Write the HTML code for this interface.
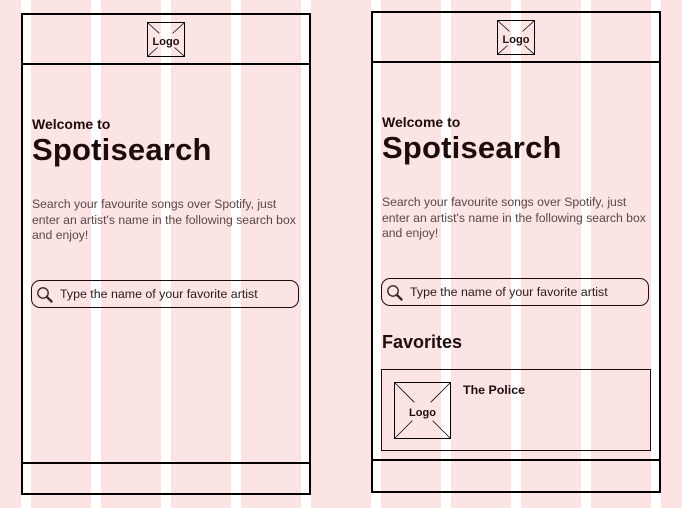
<!DOCTYPE html>
<html><head><meta charset="utf-8"><style>
body{margin:0;width:682px;height:508px;background:#fde4e4;position:relative;overflow:hidden;font-family:"Liberation Sans",Arial,sans-serif;color:#1e0c0c}
.s{position:absolute;top:0;width:10px;height:508px;background:#fff}
.frame{position:absolute;width:286px;border:2px solid #000}
.hl{position:absolute;left:0;width:100%;height:2px;background:#000}
.abs{position:absolute}
.logo{position:absolute;border:1px solid #000;box-sizing:border-box;font-weight:bold;font-size:11px;display:flex;align-items:center;justify-content:center}
.logo svg{position:absolute;left:0;top:0;width:100%;height:100%}
.logo span{position:relative;top:2px}
.wel{font-weight:bold;font-size:14px}
.big{font-weight:bold;font-size:31px;letter-spacing:0.2px}
.p{font-size:12.2px;line-height:15.6px;color:#5a4646;width:268px}
.sb{position:absolute;border:1px solid #1e0c0c;border-radius:9px;box-sizing:border-box;height:28px;width:268px;font-size:12.4px;color:#2a1a1a}
.sb span{position:absolute;left:28px;top:6px}
.sb svg{position:absolute;left:3px;top:4px}
</style></head><body>
<div class="s" style="left:21px"></div><div class="s" style="left:91px"></div><div class="s" style="left:161px"></div><div class="s" style="left:231px"></div><div class="s" style="left:301px"></div>
<div class="s" style="left:371px"></div><div class="s" style="left:441px"></div><div class="s" style="left:511px"></div><div class="s" style="left:581px"></div><div class="s" style="left:651px"></div>

<div class="frame" style="left:21px;top:13px;height:478px">
 <div class="hl" style="top:48px"></div>
 <div class="hl" style="top:447px"></div>
</div>
<div class="logo" style="left:147px;top:22px;width:38px;height:35px"><svg viewBox="0 0 38 35" preserveAspectRatio="none"><path d="M0 0L12 11M38 0L26 11M0 35L10 26M38 35L28 26" stroke="#000" stroke-width="0.8"/></svg><span>Logo</span></div>
<div class="abs wel" style="left:32px;top:116px">Welcome to</div>
<div class="abs big" style="left:32px;top:132px">Spotisearch</div>
<div class="abs p" style="left:32px;top:197px">Search your favourite songs over Spotify, just enter an artist's name in the following search box and enjoy!</div>
<div class="sb" style="left:31px;top:280px"><svg width="20" height="20" viewBox="0 0 20 20"><circle cx="8" cy="8" r="5.2" fill="none" stroke="#3a2a2a" stroke-width="1.4"/><path d="M11.8 11.8L16.5 16.5" stroke="#3a2a2a" stroke-width="2.4" stroke-linecap="round"/></svg><span>Type the name of your favorite artist</span></div>

<div class="frame" style="left:371px;top:11px;height:478px">
 <div class="hl" style="top:48px"></div>
 <div class="hl" style="top:446px"></div>
</div>
<div class="logo" style="left:497px;top:20px;width:38px;height:35px"><svg viewBox="0 0 38 35" preserveAspectRatio="none"><path d="M0 0L12 11M38 0L26 11M0 35L10 26M38 35L28 26" stroke="#000" stroke-width="0.8"/></svg><span>Logo</span></div>
<div class="abs wel" style="left:382px;top:114px">Welcome to</div>
<div class="abs big" style="left:382px;top:130px">Spotisearch</div>
<div class="abs p" style="left:382px;top:195px">Search your favourite songs over Spotify, just enter an artist's name in the following search box and enjoy!</div>
<div class="sb" style="left:381px;top:278px"><svg width="20" height="20" viewBox="0 0 20 20"><circle cx="8" cy="8" r="5.2" fill="none" stroke="#3a2a2a" stroke-width="1.4"/><path d="M11.8 11.8L16.5 16.5" stroke="#3a2a2a" stroke-width="2.4" stroke-linecap="round"/></svg><span>Type the name of your favorite artist</span></div>
<div class="abs" style="left:382px;top:332px;font-weight:bold;font-size:18px">Favorites</div>
<div class="abs" style="left:381px;top:369px;width:270px;height:82px;border:1px solid #1e0c0c;box-sizing:border-box"></div>
<div class="logo" style="left:394px;top:382px;width:57px;height:57px"><svg viewBox="0 0 57 57" preserveAspectRatio="none"><path d="M0 0L20 20M57 0L37 20M0 57L18 39M57 57L39 39" stroke="#000" stroke-width="0.8"/></svg><span>Logo</span></div>
<div class="abs" style="left:463px;top:383px;font-weight:bold;font-size:12.4px">The Police</div>
</body></html>
